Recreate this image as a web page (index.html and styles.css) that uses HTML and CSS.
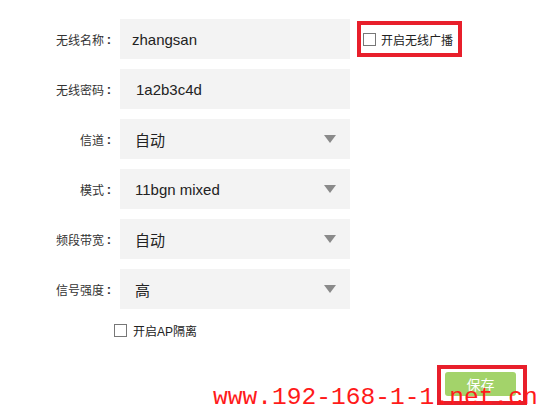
FILE: index.html
```html
<!DOCTYPE html>
<html lang="zh-CN">
<head>
    <meta charset="UTF-8">
    <meta name="viewport" content="width=device-width, initial-scale=1.0">
    <title>无线设置</title>
    <link rel="stylesheet" href="styles.css">
</head>
<body>
    <div class="form">
        <div class="row">
            <span class="label">无线名称</span><span class="colon">:</span>
            <div class="field">zhangsan</div>
            <label class="hide-ssid">
                <span class="check"></span>
                开启无线广播
            </label>
        </div>
        <div class="row">
            <span class="label">无线密码</span><span class="colon">:</span>
            <div class="field field-pwd">1a2b3c4d</div>
        </div>
        <div class="row">
            <span class="label">信道</span><span class="colon">:</span>
            <div class="field select">自动<span class="arrow"></span></div>
        </div>
        <div class="row">
            <span class="label">模式</span><span class="colon">:</span>
            <div class="field select">11bgn mixed<span class="arrow"></span></div>
        </div>
        <div class="row">
            <span class="label">频段带宽</span><span class="colon">:</span>
            <div class="field select">自动<span class="arrow"></span></div>
        </div>
        <div class="row">
            <span class="label">信号强度</span><span class="colon">:</span>
            <div class="field select">高<span class="arrow"></span></div>
        </div>
        <label class="ap-row">
            <span class="check"></span>
            开启AP隔离
        </label>
        <div class="save-row">
            <div class="save-mark">
                <button class="save-btn">保存</button>
            </div>
        </div>
    </div>

    <div class="watermark">www.192-168-1-1.net.cn</div>
</body>
</html>
```

FILE: styles.css
```css
* {
    margin: 0;
    padding: 0;
    box-sizing: border-box;
}

body {
    font-family: 'Liberation Sans', 'Noto Sans CJK SC', sans-serif;
    background-color: #fff;
    color: #222;
    width: 547px;
    height: 416px;
    overflow: hidden;
    position: relative;
}

.form {
    padding-top: 19px;
    display: flex;
    flex-direction: column;
    gap: 10px;
}

.row {
    display: flex;
    align-items: center;
    height: 40px;
}

.label {
    width: 104px;
    text-align: right;
    font-size: 12px;
    color: #333;
    white-space: nowrap;
}

.colon {
    width: 10px;
    text-align: center;
    font-size: 13px;
    font-weight: 700;
    color: #333;
}

.field {
    width: 230px;
    height: 40px;
    margin-left: 6px;
    background-color: #f3f3f3;
    display: flex;
    align-items: center;
    padding-left: 12px;
    font-size: 15px;
    position: relative;
}

.field-pwd {
    padding-left: 16px;
}

.select {
    padding-left: 15px;
}

.arrow {
    position: absolute;
    right: 14px;
    top: 16px;
    width: 0;
    height: 0;
    border-left: 6px solid transparent;
    border-right: 6px solid transparent;
    border-top: 8px solid #8a8a8a;
}

.check {
    display: inline-block;
    width: 13px;
    height: 13px;
    border: 1px solid #777;
    background-color: #fff;
}

.hide-ssid {
    margin-left: 7px;
    height: 36px;
    border: 4px solid #e81f2b;
    display: flex;
    align-items: center;
    gap: 5px;
    padding: 0 5px 0 2px;
    font-size: 12px;
    color: #222;
}

.ap-row {
    display: flex;
    align-items: center;
    gap: 6px;
    margin-left: 114px;
    margin-top: 3px;
    font-size: 12px;
    color: #222;
}

.save-row {
    display: flex;
    justify-content: flex-end;
    padding-right: 20px;
    margin-top: 16px;
}

.save-mark {
    width: 90px;
    height: 40px;
    border: 4px solid #e81f2b;
    padding: 3px 0 0 4px;
}

.save-btn {
    display: block;
    width: 71px;
    height: 24px;
    line-height: 22px;
    border: none;
    border-radius: 3px;
    background-color: #a3d36a;
    color: #fff;
    font-family: 'Noto Sans CJK SC', sans-serif;
    font-size: 14px;
}

.watermark {
    position: absolute;
    left: 213px;
    top: 384px;
    font-family: 'Liberation Mono', monospace;
    font-size: 24.6px;
    color: #ff1a1a;
    white-space: nowrap;
}
```
